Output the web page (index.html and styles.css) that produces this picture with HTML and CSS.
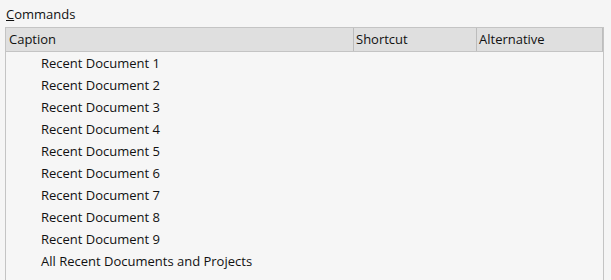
FILE: index.html
```html
<!DOCTYPE html>
<html>
<head>
<meta charset="utf-8">
<link rel="stylesheet" href="styles.css">
</head>
<body>
<div class="page">
  <div class="label"><span class="ul">C</span>ommands</div>
  <div class="grid">
    <div class="head">
      <div class="col c1">Caption</div>
      <div class="col c2">Shortcut</div>
      <div class="col c3">Alternative</div>
    </div>
    <div class="rows">
      <div class="row">Recent Document 1</div>
      <div class="row">Recent Document 2</div>
      <div class="row">Recent Document 3</div>
      <div class="row">Recent Document 4</div>
      <div class="row">Recent Document 5</div>
      <div class="row">Recent Document 6</div>
      <div class="row">Recent Document 7</div>
      <div class="row">Recent Document 8</div>
      <div class="row">Recent Document 9</div>
      <div class="row">All Recent Documents and Projects</div>
    </div>
  </div>
</div>
</body>
</html>
```

FILE: styles.css
```css
html, body {
  margin: 0;
  padding: 0;
  background: #f5f5f5;
  overflow: hidden;
}
.page {
  font-family: "Open Sans", "Noto Sans", sans-serif;
  font-size: 13px;
  color: #111111;
  padding: 5px 7px 0 5px;
  height: 280px;
  box-sizing: border-box;
}
.label {
  height: 22px;
  line-height: 18px;
  padding-left: 1px;
}
.ul {
  text-decoration: underline;
}
.grid {
  border: 1px solid #c4c4c4;
  border-bottom: none;
  background: #f6f6f6;
  height: 260px;
}
.head {
  display: flex;
  height: 23px;
  background: #dfdfdf;
  border-bottom: 1px solid #c4c4c4;
  border-right: 1px solid #bdbdbd;
}
.col {
  line-height: 23px;
  padding-left: 3px;
  box-sizing: border-box;
}
.c1 { width: 347px; }
.c2 { width: 123px; border-left: 1px solid #bcbcbc; padding-left: 2px; }
.c3 { flex: 1; border-left: 1px solid #bcbcbc; padding-left: 2px; }
.row {
  height: 22px;
  line-height: 22px;
  padding-left: 35px;
}
```
